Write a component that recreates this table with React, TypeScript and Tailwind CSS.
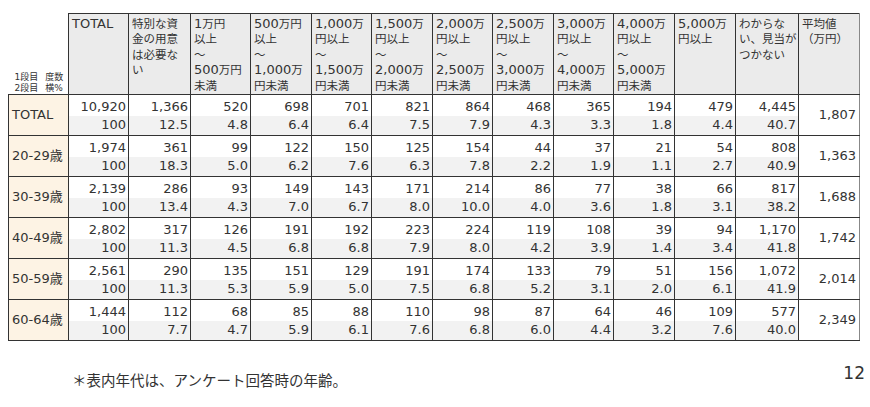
import React from 'react';

const colW = [
  'w-[60px]', 'w-[60px]', 'w-[62px]', 'w-[60px]', 'w-[61px]', 'w-[60px]', 'w-[61px]',
  'w-[60px]', 'w-[61px]', 'w-[60px]', 'w-[61px]', 'w-[61px]', 'w-[63px]', 'w-[61px]',
];

const headers: string[][] = [
  ['TOTAL'],
  ['特別な資', '金の用意', 'は必要な', 'い'],
  ['1万円', '以上', '～', '500万円', '未満'],
  ['500万円', '以上', '～', '1,000万', '円未満'],
  ['1,000万', '円以上', '～', '1,500万', '円未満'],
  ['1,500万', '円以上', '～', '2,000万', '円未満'],
  ['2,000万', '円以上', '～', '2,500万', '円未満'],
  ['2,500万', '円以上', '～', '3,000万', '円未満'],
  ['3,000万', '円以上', '～', '4,000万', '円未満'],
  ['4,000万', '円以上', '～', '5,000万', '円未満'],
  ['5,000万', '円以上'],
  ['わからな', 'い、見当が', 'つかない'],
  ['平均値', '（万円）'],
];

interface Group {
  label: string;
  counts: string[];
  pcts: string[];
  avg: string;
}

const groups: Group[] = [
  {
    label: 'TOTAL',
    counts: ['10,920', '1,366', '520', '698', '701', '821', '864', '468', '365', '194', '479', '4,445'],
    pcts: ['100', '12.5', '4.8', '6.4', '6.4', '7.5', '7.9', '4.3', '3.3', '1.8', '4.4', '40.7'],
    avg: '1,807',
  },
  {
    label: '20-29歳',
    counts: ['1,974', '361', '99', '122', '150', '125', '154', '44', '37', '21', '54', '808'],
    pcts: ['100', '18.3', '5.0', '6.2', '7.6', '6.3', '7.8', '2.2', '1.9', '1.1', '2.7', '40.9'],
    avg: '1,363',
  },
  {
    label: '30-39歳',
    counts: ['2,139', '286', '93', '149', '143', '171', '214', '86', '77', '38', '66', '817'],
    pcts: ['100', '13.4', '4.3', '7.0', '6.7', '8.0', '10.0', '4.0', '3.6', '1.8', '3.1', '38.2'],
    avg: '1,688',
  },
  {
    label: '40-49歳',
    counts: ['2,802', '317', '126', '191', '192', '223', '224', '119', '108', '39', '94', '1,170'],
    pcts: ['100', '11.3', '4.5', '6.8', '6.8', '7.9', '8.0', '4.2', '3.9', '1.4', '3.4', '41.8'],
    avg: '1,742',
  },
  {
    label: '50-59歳',
    counts: ['2,561', '290', '135', '151', '129', '191', '174', '133', '79', '51', '156', '1,072'],
    pcts: ['100', '11.3', '5.3', '5.9', '5.0', '7.5', '6.8', '5.2', '3.1', '2.0', '6.1', '41.9'],
    avg: '2,014',
  },
  {
    label: '60-64歳',
    counts: ['1,444', '112', '68', '85', '88', '110', '98', '87', '64', '46', '109', '577'],
    pcts: ['100', '7.7', '4.7', '5.9', '6.1', '7.6', '6.8', '6.0', '4.4', '3.2', '7.6', '40.0'],
    avg: '2,349',
  },
];

// Latin runs a bit bigger than the kana/kanji, like Meiryo in the original
const Mixed: React.FC<{ text: string }> = ({ text }) => {
  const parts = text.split(/([\x20-\x7E]+)/).filter(Boolean);
  return (
    <>
      {parts.map((p, i) =>
        /^[\x20-\x7E]+$/.test(p) ? (
          <span key={i} className="text-[13px]">{p}</span>
        ) : (
          <span key={i} className="text-[11.5px]">{p}</span>
        )
      )}
    </>
  );
};

export default function App() {
  return (
    <div
      className="w-[870px] h-[407px] bg-white text-[#333] pl-[8px] pt-[13px]"
      style={{ fontFamily: '"DejaVu Sans", "Noto Sans CJK JP", sans-serif' }}
    >
      <table className="table-fixed border-collapse w-[851px]">
        <colgroup>
          {colW.map((w, i) => (
            <col key={i} className={w} />
          ))}
        </colgroup>
        <thead>
          <tr className="h-[81px]">
            <th className="align-bottom p-0 font-normal">
              <div className="text-[9px] leading-[11px] pl-[6px] text-left">
                <div className="flex gap-[7px]">
                  <span>1段目</span>
                  <span>度数</span>
                </div>
                <div className="flex gap-[7px]">
                  <span>2段目</span>
                  <span>横%</span>
                </div>
              </div>
            </th>
            {headers.map((lines, i) => (
              <th
                key={i}
                className={`align-top text-left font-normal border border-[#333] bg-[#ebebeb] pl-[3px] pt-[2px] ${
                  i === headers.length - 1 ? 'border-r-[#888]' : ''
                }`}
              >
                {lines.map((l, j) => (
                  <div key={j} className="leading-[13.4px] whitespace-nowrap">
                    <Mixed text={l} />
                  </div>
                ))}
              </th>
            ))}
          </tr>
        </thead>
        <tbody>
          {groups.map((g) => (
            <React.Fragment key={g.label}>
              <tr className="h-[21px]">
                <td
                  rowSpan={2}
                  className="border border-[#333] bg-[#fdf3e4] pl-[3px] text-[13px] align-middle whitespace-nowrap"
                >
                  {g.label}
                </td>
                {g.counts.map((v, i) => (
                  <td
                    key={i}
                    className="border-x border-t border-[#333] text-right pr-[2px] text-[13px] leading-[16px] pt-[3px] align-middle"
                  >
                    {v}
                  </td>
                ))}
                <td
                  rowSpan={2}
                  className="border border-[#333] border-r-[#888] text-right pr-[3px] text-[13px] align-middle"
                >
                  {g.avg}
                </td>
              </tr>
              <tr className="h-[20px]">
                {g.pcts.map((v, i) => (
                  <td
                    key={i}
                    className="border-x border-b border-[#333] bg-[#f2f2f2] text-right pr-[2px] text-[13px] leading-[16px] align-middle"
                  >
                    {v}
                  </td>
                ))}
              </tr>
            </React.Fragment>
          ))}
        </tbody>
      </table>
      <div className="flex justify-between items-start pl-[64px] pr-[5px] mt-[19px]">
        <div className="text-[14.5px] leading-[20px] mt-[11px]">＊表内年代は、アンケート回答時の年齢。</div>
        <div className="text-[17px] leading-[20px] mt-[3px]">12</div>
      </div>
    </div>
  );
}
